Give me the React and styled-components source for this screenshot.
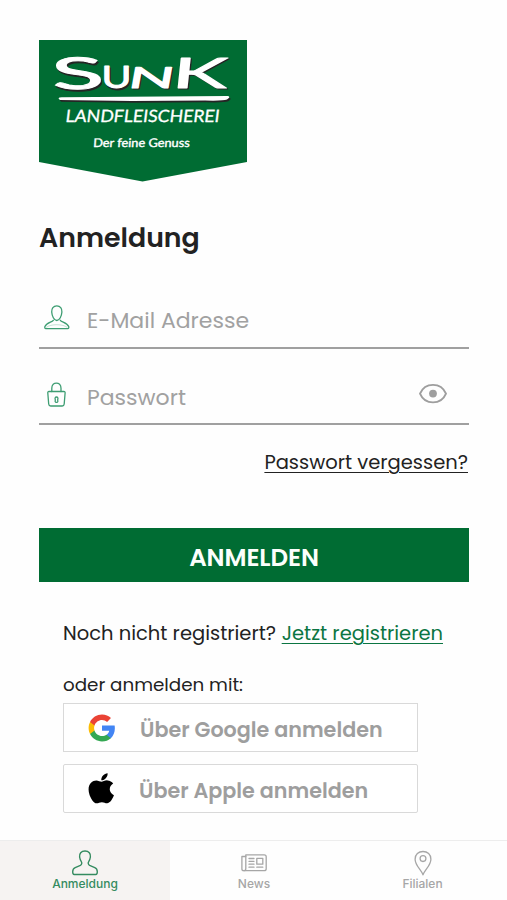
import React from 'react';
import styled, { createGlobalStyle } from 'styled-components';
import { FaApple } from 'react-icons/fa';

const green = '#006c33';
const grey = '#9e9e9e';

const GlobalStyle = createGlobalStyle`
  * { box-sizing: border-box; }
  body { margin: 0; background: #fefefe; }
  svg { display: block; flex: none; }
`;

const Screen = styled.div`
  display: flex;
  flex-direction: column;
  height: 900px;
  font-family: Poppins, Inter, "Open Sans", sans-serif;
  color: #222;
`;

const Main = styled.main`
  flex: 1;
  display: flex;
  flex-direction: column;
  padding: 40px 38px 0 39px;
`;

const Title = styled.h1`
  margin: 39px 0 36px;
  font-size: 26.8px;
  line-height: 34px;
  font-weight: 600;
`;

const Fields = styled.div`
  display: flex;
  flex-direction: column;
  gap: 18px;
`;

const Field = styled.label`
  display: flex;
  align-items: center;
  height: 58px;
  padding: 3px 22px 0 4px;
  border-bottom: 2px solid #a0a0a0;
`;

const FieldIcon = styled.span`
  display: flex;
  padding-bottom: ${(p) => p.$lift};
`;

const Input = styled.input`
  flex: 1;
  min-width: 0;
  height: 34px;
  margin-left: 16px;
  padding: ${(p) => p.$drop || '0'} 0 0;
  border: 0;
  outline: 0;
  background: transparent;
  font: inherit;
  font-size: 22px;
  &::placeholder { color: #a1a1a1; opacity: 1; }
`;

const TextLink = styled.a`
  color: ${(p) => p.$color || 'inherit'};
  text-decoration: underline;
  text-decoration-thickness: 1px;
  text-underline-offset: 3px;
`;

const Forgot = styled.div`
  margin: 24px 1px 0 0;
  align-self: flex-end;
  font-size: 19.5px;
  line-height: 28px;
`;

const Submit = styled.button`
  height: 54px;
  margin-top: 51px;
  padding: 4px 0 0;
  border: 0;
  background: ${green};
  color: #fbfffc;
  font: inherit;
  font-size: 24.5px;
  font-weight: 600;
  letter-spacing: -0.1px;
`;

const Alternatives = styled.section`
  display: flex;
  flex-direction: column;
  padding: 38px 0 0 24px;
`;

const Register = styled.div`
  display: flex;
  justify-content: space-between;
  width: 380px;
  font-size: 19.5px;
  line-height: 28px;
  white-space: nowrap;
`;

const Hint = styled.p`
  margin: 23px 0 4px;
  font-size: 18.3px;
  line-height: 28px;
`;

const Providers = styled.div`
  display: flex;
  flex-direction: column;
  gap: 12px;
  width: 355px;
`;

const Provider = styled.button`
  display: flex;
  align-items: center;
  height: 49px;
  padding: 0 0 0 20px;
  border: 1px solid #d9d9d9;
  border-radius: ${(p) => p.$radius};
  background: #fff;
  color: ${grey};
  font: inherit;
  font-size: 20.7px;
  font-weight: 600;
`;

const ProviderIcon = styled.span`
  display: flex;
  justify-content: center;
  width: 35px;
  margin-right: ${(p) => p.$gap};
  color: #000;
`;

const ProviderLabel = styled.span`
  padding-top: 4px;
`;

const TabBar = styled.nav`
  display: grid;
  grid-template-columns: 170px 168px 169px;
  height: 60px;
  border-top: 1px solid #ededed;
`;

const Tab = styled.a`
  display: flex;
  flex-direction: column;
  align-items: center;
  padding-top: 7px;
  background: ${(p) => (p.$active ? '#f6f3f2' : 'transparent')};
  color: ${(p) => (p.$active ? '#348b60' : '#a6a6a6')};
  font: 500 12px/16px Inter, sans-serif;
`;

const LogoText = styled.text`
  font-family: Lato, sans-serif;
  font-weight: ${(p) => p.$weight};
  font-size: ${(p) => p.$size}px;
  fill: ${(p) => p.$fill || '#fff'};
  stroke: ${(p) => p.$fill || '#fff'};
  stroke-width: ${(p) => p.$stroke || 0}px;
  stroke-linejoin: round;
`;

/* skew leans each letter of the wordmark by its own angle, in degrees */
const wordmark = [
  { letter: 'S', x: 14, y: 49, width: 52, size: 44, skew: 5 },
  { letter: 'U', x: 62.5, y: 48, width: 30, size: 30, skew: 0 },
  { letter: 'N', x: 88, y: 47.5, width: 46, size: 29, skew: -10 },
  { letter: 'K', x: 132, y: 47.5, width: 55, size: 42, skew: -6 },
];

const Wordmark = ({ fill }) =>
  wordmark.map((g) => (
    <g key={g.letter} transform={`translate(${g.x} ${g.y}) skewX(${g.skew})`}>
      <LogoText textLength={g.width} lengthAdjust="spacingAndGlyphs"
        $size={g.size} $weight={400} $stroke={1} $fill={fill}>{g.letter}</LogoText>
    </g>
  ));

const bar = 'M21 60Q17 57 24 57.3L189 56Q192 57 188 59.5Q184 61 166 60.5L93 61Z';

const Logo = () => (
  <svg width="208" height="142" viewBox="0 0 208 142" role="img" aria-label="Sunk Landfleischerei">
    <path d="M0 0H208V122L103.500 141.500L0 122Z" fill={green} />
    <g transform="translate(1.300 1.800)">
      <Wordmark fill="#252525" />
      <path d={bar} fill="#252525" />
    </g>
    <Wordmark />
    <path d={bar} fill="#fff" />
    <g transform="translate(26 81.500) skewX(-7)">
      <LogoText textLength="154" lengthAdjust="spacingAndGlyphs" $size={17} $weight={400} $stroke={0.3}>LANDFLEISCHEREI</LogoText>
    </g>
    <g transform="translate(54 106.500) skewX(-4)">
      <LogoText textLength="96.500" lengthAdjust="spacingAndGlyphs" $size={12} $weight={400} $stroke={0.4}>Der feine Genuss</LogoText>
    </g>
  </svg>
);

const line = { fill: 'none', stroke: 'currentColor', strokeLinecap: 'round', strokeLinejoin: 'round' };

const UserIcon = () => (
  <svg width="28" height="28" viewBox="0 0 28 28" color="#3d9d72" {...line} strokeWidth="1.300">
    <path d="M13.800 1.800C10.300 1.800 8.500 4.500 8.700 8C9 12 11 16.500 13.800 16.500S18.600 12 18.900 8C19.100 4.500 17.300 1.800 13.800 1.800Z" />
    <path d="M10.300 16.300C9 18.200 3.500 18.500 1.900 22.500Q1.400 24.600 2.800 24.600H24.800Q26.200 24.600 25.700 22.500C24 18.500 18.600 18.200 17.300 16.300" />
    <path d="M3.500 23.200C7.500 19.800 20 19.800 24 23.200" strokeWidth="0.600" opacity="0.500" />
  </svg>
);

const LockIcon = () => (
  <svg width="28" height="28" viewBox="0 0 28 28" color="#3d9d72" {...line} strokeWidth="1.300">
    <path d="M8.800 11.500V8.200C8.800 1.300 18 1.300 18 8.200V11.500" />
    <path d="M6 11.500H20.800Q22.300 11.500 22.100 13L21.200 24Q21 26 19.200 26H7.700Q5.900 26 5.700 24L4.800 13Q4.600 11.500 6 11.500Z" />
    <path d="M13.500 17C12.200 17 11.800 18.200 12.200 19.200C12.600 20.200 12 20.800 12.200 21.600C12.400 22.600 14.600 22.600 14.800 21.600C15 20.800 14.400 20.200 14.800 19.200C15.200 18.200 14.800 17 13.500 17Z" />
  </svg>
);

const EyeIcon = () => (
  <svg width="28" height="26" viewBox="0 0 28 26" color={grey} {...line} strokeWidth="1.900">
    <path d="M1 10.600C6 -1.100 22 -1.100 27 10.600C22 22.300 6 22.300 1 10.600Z" />
    <circle cx="14" cy="10.600" r="3.900" fill="currentColor" stroke="none" />
  </svg>
);

const GoogleIcon = () => (
  <svg width="28" height="28" viewBox="0.500 0.500 23 23">
    <path fill="#4285f4" d="M22.560 12.250c0-.780-.070-1.530-.200-2.250H12v4.260h5.920c-.260 1.370-1.040 2.530-2.210 3.310v2.770h3.570c2.080-1.920 3.280-4.740 3.280-8.090z" />
    <path fill="#34a853" d="M12 23c2.970 0 5.460-.980 7.280-2.660l-3.570-2.770c-.980.660-2.230 1.060-3.710 1.060-2.860 0-5.290-1.930-6.160-4.530H2.180v2.840C3.990 20.530 7.700 23 12 23z" />
    <path fill="#fbbc05" d="M5.840 14.090c-.220-.660-.350-1.360-.350-2.090s.130-1.430.350-2.090V7.070H2.180C1.430 8.550 1 10.220 1 12s.430 3.450 1.180 4.930l3.660-2.840z" />
    <path fill="#ea4335" d="M12 5.380c1.620 0 3.060.560 4.210 1.640l3.150-3.150C17.450 2.090 14.970 1 12 1 7.700 1 3.990 3.470 2.180 7.070l3.660 2.840c.870-2.600 3.300-4.530 6.160-4.530z" />
  </svg>
);

const TabUserIcon = () => (
  <svg width="28" height="28" viewBox="0 0 28 28" {...line} strokeWidth="1.400">
    <path d="M14 3C10.200 3 8.100 5.500 8.600 9C8.900 11 9.300 12.300 10.300 13.600C11.200 14.800 10.800 16.700 9.400 17.400L4.200 19.600C2.200 20.500 1.700 21.500 1.700 23.800Q1.700 26.500 3.200 26.500H24.800Q26.300 26.500 26.300 23.800C26.300 21.500 25.800 20.500 23.800 19.600L18.600 17.400C17.200 16.700 16.800 14.800 17.700 13.600C18.700 12.300 19.100 11 19.400 9C19.900 5.500 17.800 3 14 3Z" />
  </svg>
);

const NewsIcon = () => (
  <svg width="28" height="28" viewBox="0 0 28 28" {...line} strokeWidth="1.300">
    <path d="M5.800 6.800H24.200Q26.200 6.800 26.200 8.800V20.700Q26.200 22.700 24.200 22.700H3.600Q1.900 22.700 1.900 21V8.500H5.800Z" />
    <path d="M5.800 8.500V20.500Q5.800 22.700 4 22.700M9 10.500H14M9 13.300H14M9 16.200H14M9 19.200H14M16.800 19.200H22.800" />
    <path d="M16.800 10.300H22.800V16.200H16.800Z" />
  </svg>
);

const PinIcon = () => (
  <svg width="28" height="28" viewBox="0 0 28 28" {...line} strokeWidth="1.300">
    <path d="M14 26.800C12 21.500 6.100 17.500 6.100 11.200C6.100 6.500 9.500 3.500 14 3.500S21.900 6.500 21.900 11.200C21.900 17.500 16 21.500 14 26.800Z" />
    <circle cx="14" cy="10.600" r="2.900" />
  </svg>
);

export default function App() {
  return (
    <Screen>
      <GlobalStyle />
      <Main>
        <Logo />
        <Title>Anmeldung</Title>
        <Fields>
          <Field>
            <FieldIcon $lift="6px"><UserIcon /></FieldIcon>
            <Input type="email" placeholder="E-Mail Adresse" />
          </Field>
          <Field>
            <FieldIcon $lift="6px"><LockIcon /></FieldIcon>
            <Input type="password" placeholder="Passwort" $drop="2px" />
            <FieldIcon $lift="1px"><EyeIcon /></FieldIcon>
          </Field>
        </Fields>
        <Forgot>
          <TextLink>Passwort vergessen?</TextLink>
        </Forgot>
        <Submit>ANMELDEN</Submit>
        <Alternatives>
          <Register>
            <span>Noch nicht registriert?</span>
            <TextLink $color="#0b7542">Jetzt registrieren</TextLink>
          </Register>
          <Hint>oder anmelden mit:</Hint>
          <Providers>
            <Provider $radius="0">
              <ProviderIcon $gap="21px"><GoogleIcon /></ProviderIcon>
              <ProviderLabel>Über Google anmelden</ProviderLabel>
            </Provider>
            <Provider $radius="2px">
              <ProviderIcon $gap="20px"><FaApple size={34.5} /></ProviderIcon>
              <ProviderLabel>Über Apple anmelden</ProviderLabel>
            </Provider>
          </Providers>
        </Alternatives>
      </Main>
      <TabBar>
        <Tab $active><TabUserIcon />Anmeldung</Tab>
        <Tab><NewsIcon />News</Tab>
        <Tab><PinIcon />Filialen</Tab>
      </TabBar>
    </Screen>
  );
}
